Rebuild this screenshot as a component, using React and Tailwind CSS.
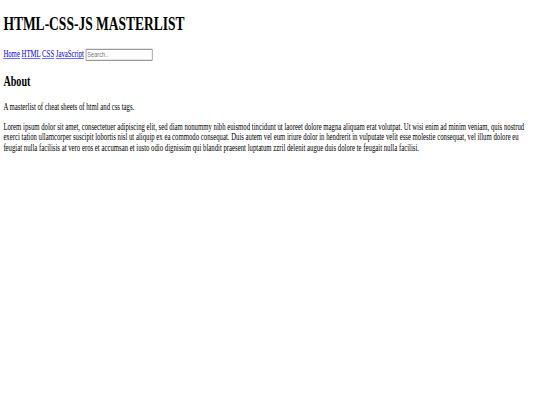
const links = ['Home', 'HTML', 'CSS', 'JavaScript']

const lorem =
  'Lorem ipsum dolor sit amet, consectetuer adipiscing elit, sed diam nonummy nibh euismod tincidunt ut laoreet dolore magna aliquam erat volutpat. Ut wisi enim ad minim veniam, quis nostrud exerci tation ullamcorper suscipit lobortis nisl ut aliquip ex ea commodo consequat. Duis autem vel eum iriure dolor in hendrerit in vulputate velit esse molestie consequat, vel illum dolore eu feugiat nulla facilisis at vero eros et accumsan et iusto odio dignissim qui blandit praesent luptatum zzril delenit augue duis dolore te feugait nulla facilisi.'

// page was shot at a 1280px wide viewport and squeezed into 540x405
export default function App() {
  return (
    <div className="w-[540px] h-[405px] overflow-hidden bg-white">
      <div className="w-[1280px] h-[700px] origin-top-left scale-x-[0.421875] scale-y-[0.58] flow-root px-2 font-['Liberation_Serif','Times_New_Roman',serif] text-[16px] text-black">
        <h1 className="mt-[22px] mb-[21.44px] text-[32px] font-bold leading-[37px]">
          HTML-CSS-JS MASTERLIST
        </h1>
        <nav className="pt-[4px] pb-[2px] leading-[18px]">
          {links.map((l) => (
            <span key={l}>
              <a href="#" className="text-[#0000ee] underline">
                {l}
              </a>{' '}
            </span>
          ))}
          <input
            type="text"
            placeholder="Search.."
            className="inline-block align-middle w-[159px] h-[21px] px-[2px] py-[1px] border-2 border-[#9a9a9a] rounded-[2px] bg-white font-['Liberation_Sans',Arial,sans-serif] text-[13.33px] placeholder:text-[#757575]"
          />
        </nav>
        <h2 className="mt-[19.92px] mb-[19.92px] text-[24px] font-bold leading-[28px]">
          About
        </h2>
        <p className="my-4 leading-[18.4px]">A masterlist of cheat sheets of html and css tags.</p>
        <p className="my-4 leading-[18.4px]">{lorem}</p>
      </div>
    </div>
  )
}
